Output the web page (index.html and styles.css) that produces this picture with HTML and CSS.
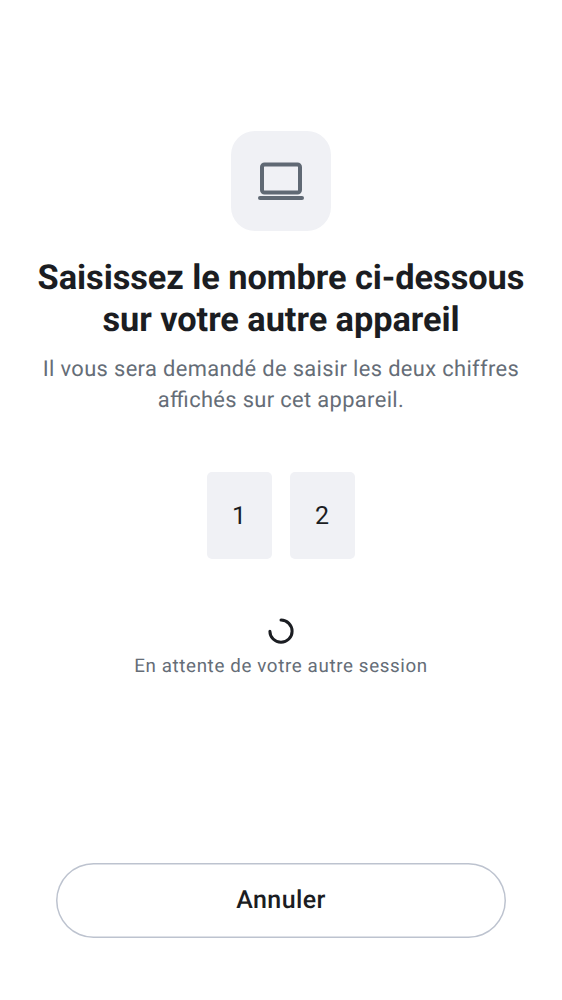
FILE: index.html
```html
<!DOCTYPE html>
<html lang="fr">
<head>
<meta charset="utf-8">
<title>Vérification</title>
<link rel="stylesheet" href="styles.css">
</head>
<body>
<main class="screen">
  <div class="badge">
    <svg class="laptop" viewBox="0 0 48 40" width="48" height="40">
      <rect x="5" y="3.5" width="38" height="28" rx="2.5" fill="none" stroke="#606974" stroke-width="4"/>
      <path d="M3 37H45" stroke="#606974" stroke-width="4" stroke-linecap="round"/>
    </svg>
  </div>
  <h1 class="title">Saisissez le nombre ci-dessous<br>sur votre autre appareil</h1>
  <p class="subtitle">Il vous sera demandé de saisir les deux chiffres<br>affichés sur cet appareil.</p>
  <div class="digits"><span class="digit">1</span><span class="digit">2</span></div>
  <div class="waiting">
    <svg class="spinner" viewBox="0 0 26 26" width="26" height="26">
      <path d="M13 2.1A11.1 11.1 0 1 1 1.9 13.2" fill="none" stroke="#1b1d22" stroke-width="3" stroke-linecap="round"/>
    </svg>
    <p class="status">En attente de votre autre session</p>
  </div>
  <button class="cancel" type="button">Annuler</button>
</main>
</body>
</html>
```
FILE: styles.css
```css
body {
  margin: 0;
  background: #fff;
  font-family: Roboto, sans-serif;
  color: #1b1d22;
  text-rendering: geometricPrecision;
}
.screen {
  box-sizing: border-box;
  height: 1000px;
  padding: 131px 0 62.5px;
  display: flex;
  flex-direction: column;
  align-items: center;
  text-align: center;
}
.badge {
  width: 100px;
  height: 100px;
  border-radius: 24px;
  background: #f0f1f5;
  display: flex;
  align-items: center;
  justify-content: center;
}
.title {
  margin: 26px 0 0;
  font-size: 34.375px;
  line-height: 42px;
  font-weight: 700;
  letter-spacing: -0.06px;
  white-space: nowrap;
}
.subtitle {
  margin: 13px 0 0;
  font-size: 21.875px;
  line-height: 31px;
  letter-spacing: 0.36px;
  font-feature-settings: "liga" 1;
  color: #656d77;
  white-space: nowrap;
}
.digits {
  margin-top: 56px;
  display: flex;
  gap: 18px;
}
.digit {
  box-sizing: border-box;
  width: 65px;
  height: 87px;
  padding-top: 1px;
  border-radius: 5px;
  background: #f0f1f5;
  font-size: 25px;
  line-height: 87px;
  letter-spacing: 0.8px;
}
.waiting {
  margin-top: 59px;
  display: flex;
  flex-direction: column;
  align-items: center;
}
.status {
  margin: 10px 0 0;
  font-size: 18.75px;
  line-height: 25px;
  letter-spacing: 0.63px;
  color: #656d77;
}
.cancel {
  margin-top: auto;
  width: 450px;
  height: 75px;
  padding: 0;
  border: 0;
  border-radius: 38px;
  box-shadow: inset 0 0 0 1.5px #bdc3cf;
  background: #fff;
  color: #1b1d22;
  font: 500 25px Roboto, sans-serif;
  letter-spacing: 0.39px;
  text-rendering: geometricPrecision;
}
```
